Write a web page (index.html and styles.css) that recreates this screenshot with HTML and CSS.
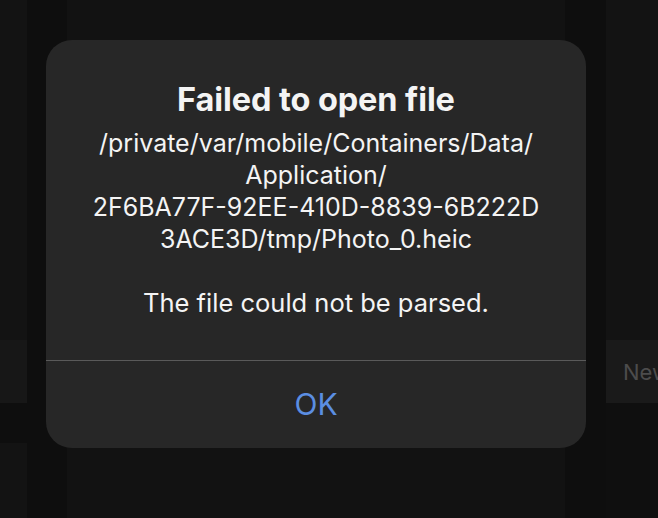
FILE: index.html
```html
<!DOCTYPE html>
<html lang="en">
<head>
<meta charset="utf-8">
<title>Failed to open file</title>
<link rel="stylesheet" href="styles.css">
</head>
<body>
<div class="backdrop">
  <div class="col col-left">
    <div class="cell cell-top"></div>
    <div class="cell cell-box"></div>
    <div class="cell cell-dark"></div>
    <div class="cell cell-rest"></div>
  </div>
  <div class="strip strip-left"></div>
  <div class="col col-mid"></div>
  <div class="strip strip-right"></div>
  <div class="col col-right">
    <div class="cell cell-top"></div>
    <div class="cell cell-box new-box"><span class="new-label">New</span></div>
    <div class="cell cell-bottom"></div>
  </div>
</div>

<div class="alert" role="alertdialog" aria-labelledby="alert-title">
  <div class="alert-content">
    <h1 id="alert-title" class="alert-title">Failed to open file</h1>
    <p class="alert-path">/private/var/mobile/Containers/Data/<br>Application/<br>2F6BA77F-92EE-410D-8839-6B222D<br>3ACE3D/tmp/Photo_0.heic</p>
    <p class="alert-message">The file could not be parsed.</p>
  </div>
  <button class="alert-button" type="button">OK</button>
</div>
</body>
</html>
```
FILE: styles.css
```css
html, body {
  margin: 0;
  padding: 0;
  width: 658px;
  height: 518px;
  overflow: hidden;
  background: #121212;
  font-family: Inter, "Noto Sans", "Liberation Sans", sans-serif;
}

.backdrop {
  display: flex;
  width: 658px;
  height: 518px;
}

.col {
  display: flex;
  flex-direction: column;
}

.col-left { width: 27px; }
.col-mid { flex: 1; background: #121212; }
.col-right { width: 52px; overflow: hidden; }

.strip { background: #0e0e0e; }
.strip-left { width: 40px; }
.strip-right { width: 41px; }

.cell-top { height: 340px; background: #131313; }
.cell-box { height: 63px; background: #171717; }
.col-left .cell-dark { height: 40px; background: #0e0e0e; }
.col-left .cell-rest { flex: 1; background: #131313; }
.col-right .cell-bottom { flex: 1; background: #0f0f0f; }

.new-box {
  background: #1a1a1a;
  display: flex;
  align-items: center;
  padding-left: 17px;
  overflow: hidden;
  white-space: nowrap;
}

.new-label {
  color: #4c4c4c;
  font-size: 22px;
}

.alert {
  position: absolute;
  left: 46px;
  top: 40px;
  width: 540px;
  height: 408px;
  background: #272727;
  border-radius: 26px;
  display: flex;
  flex-direction: column;
  color: #f4f4f4;
  text-align: center;
  overflow: hidden;
}

.alert-content {
  height: 321px;
  box-sizing: border-box;
  padding-top: 41px;
  border-bottom: 1px solid #5a5a5a;
}

.alert-title {
  margin: 0;
  font-size: 32.5px;
  font-weight: 700;
  line-height: 38px;
  letter-spacing: -0.1px;
}

.alert-path {
  margin: 8px 0 0;
  font-size: 25px;
  line-height: 32px;
  white-space: nowrap;
}

.alert-message {
  margin: 32px 0 0;
  font-size: 25.5px;
  line-height: 32px;
}

.alert-button {
  flex: 1;
  background: transparent;
  border: 0;
  padding: 0 0 2px;
  font-family: inherit;
  font-size: 30px;
  color: #5b8ee2;
}
```
